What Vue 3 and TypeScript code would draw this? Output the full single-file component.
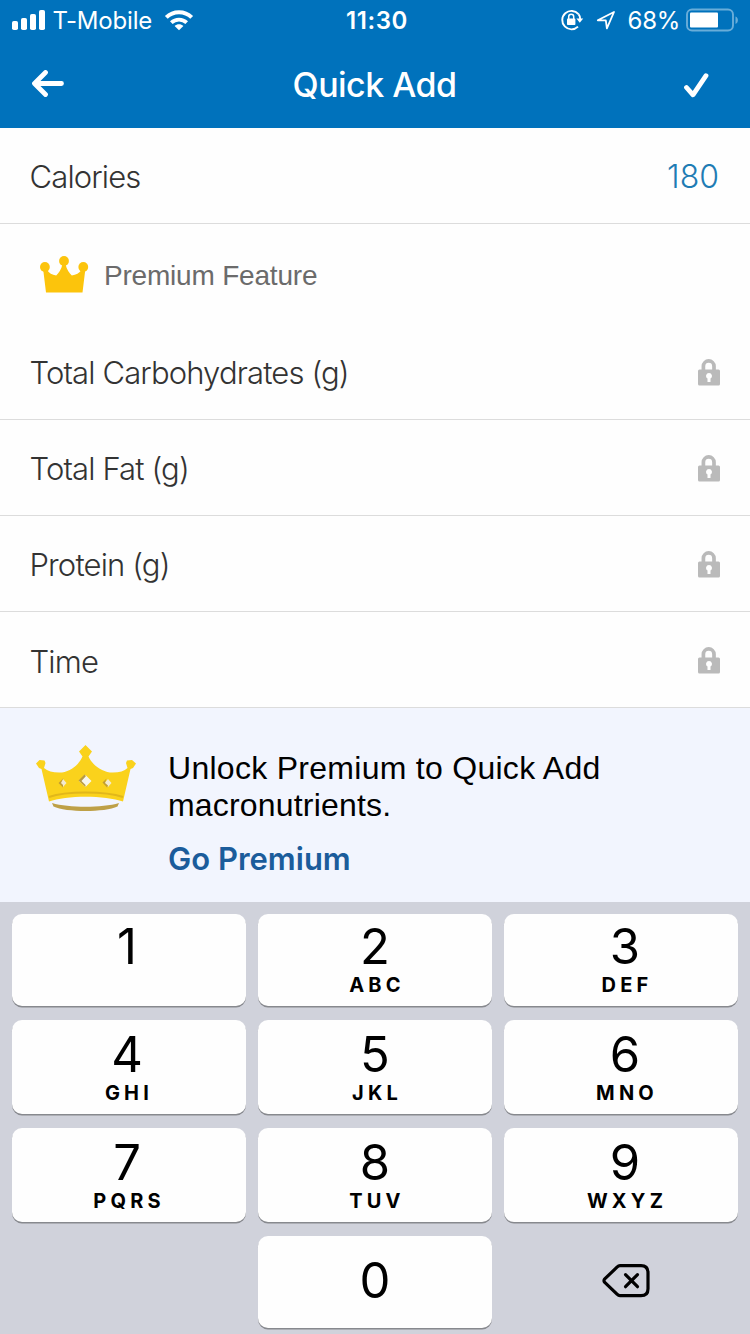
<script setup lang="ts">
interface Key {
  digit: string
  letters: string
}

const lockedFields: { label: string; cls: string }[] = [
  { label: 'Total Carbohydrates (g)', cls: 'carbs' },
  { label: 'Total Fat (g)', cls: 'fat' },
  { label: 'Protein (g)', cls: 'protein' },
  { label: 'Time', cls: 'time' },
]

const keys: Key[] = [
  { digit: '1', letters: '' },
  { digit: '2', letters: 'ABC' },
  { digit: '3', letters: 'DEF' },
  { digit: '4', letters: 'GHI' },
  { digit: '5', letters: 'JKL' },
  { digit: '6', letters: 'MNO' },
  { digit: '7', letters: 'PQRS' },
  { digit: '8', letters: 'TUV' },
  { digit: '9', letters: 'WXYZ' },
]
</script>

<template>
  <div class="screen">
    <header class="header">
      <div class="status">
        <div class="status-side">
          <svg class="signal" width="34" height="21" viewBox="0 0 34 21" fill="#fff">
            <rect x="0" y="11" width="6" height="9" rx="1.8" />
            <rect x="9" y="8" width="6" height="12" rx="1.8" />
            <rect x="18" y="4" width="6" height="16" rx="1.8" />
            <rect x="27" y="0" width="6" height="20" rx="1.8" />
          </svg>
          <span class="carrier">T-Mobile</span>
          <svg class="wifi" width="30" height="21" viewBox="0 0 30 21">
            <path d="M2.3 7.4C9.3 .4 20.7 .4 27.7 7.4" fill="none" stroke="#fff" stroke-width="4" />
            <path d="M7.3 12.6C11.6 8.5 18.4 8.5 22.7 12.6" fill="none" stroke="#fff" stroke-width="3.8" />
            <path d="M15 20.3L10.6 16C13.1 13.7 16.9 13.7 19.4 16Z" fill="#fff" />
          </svg>
        </div>
        <span class="clock">11:30</span>
        <div class="status-side right">
          <svg class="rotation" width="24" height="22" viewBox="0 0 24 22">
            <path d="M18.5 5.2A9.2 9.2 0 1 0 18 17.6" fill="none" stroke="#fff" stroke-width="1.9" />
            <path d="M18.5 5.2Q20 7 20.2 10" fill="none" stroke="#fff" stroke-width="1.9" />
            <path d="M16.4 9.4H23.2L19.8 13.8Z" fill="#fff" />
            <rect x="7" y="9.6" width="8.4" height="6.4" rx=".8" fill="#fff" />
            <path d="M8.7 10V7.8a2.5 2.5 0 0 1 5 0V10" fill="none" stroke="#fff" stroke-width="1.5" />
          </svg>
          <svg class="location" width="20" height="20" viewBox="0 0 20 20">
            <path d="M1.8 10.3L18 2L10.9 18.3L9.8 10.3Z" fill="none" stroke="#fff" stroke-width="1.8" stroke-linejoin="round" />
          </svg>
          <span class="percent">68%</span>
          <svg class="battery" width="54" height="24" viewBox="0 0 54 24">
            <rect x="1" y="1.5" width="46" height="21" rx="5" fill="none" stroke="#69add9" stroke-width="1.9" />
            <rect x="4" y="4.5" width="28" height="15" rx="1" fill="#fff" />
            <path d="M49.5 8.5v7.4c3.2-1.2 3.2-6.2 0-7.4Z" fill="#69add9" />
          </svg>
        </div>
      </div>
      <div class="nav">
        <svg width="34" height="28" viewBox="0 0 34 28" fill="none" stroke="#fff" stroke-width="4.8" stroke-linecap="round" stroke-linejoin="round">
          <path d="M14.5 2.5L3.5 13.5L14.5 24.5M4 13.5H30.5" />
        </svg>
        <h1 class="title">Quick Add</h1>
        <svg width="34" height="28" viewBox="0 0 34 28" fill="none" stroke="#fff" stroke-width="4.8" stroke-linecap="round" stroke-linejoin="round">
          <path d="M8.5 17.5L15 24.800L28 5.700" />
        </svg>
      </div>
    </header>

    <main>
      <div class="row calories">
        <span class="label">Calories</span>
        <span class="value">180</span>
      </div>

      <div class="premium">
        <svg width="50" height="38" viewBox="0 0 50 38" fill="#fcc40c">
          <circle cx="4.9" cy="11" r="4.9" />
          <circle cx="24" cy="5" r="4.9" />
          <circle cx="43.3" cy="11" r="4.9" />
          <path d="M3 12L7 14C9 17 12 19 16.2 19.5C18.500 17 21.5 13.5 22.5 8H25.5C26.500 13.5 29.5 17 31.8 19.5C36 19 39.5 17 41.500 14L45.500 12L42.500 36.500H6Z" />
        </svg>
        <span class="premium-text">Premium Feature</span>
      </div>

      <div v-for="field in lockedFields" :key="field.label" class="row" :class="field.cls">
        <span class="label">{{ field.label }}</span>
        <svg class="lock" width="24" height="28" viewBox="0 0 24 28">
          <path d="M6.4 13V7.2a5.3 5.3 0 0 1 10.6 0V13" fill="none" stroke="#bababa" stroke-width="3.7" />
          <rect x="1" y="10.5" width="22" height="16" rx="1.5" fill="#bababa" />
          <path d="M12 14a3 3 0 0 1 1.5 5.6V23h-3V19.6A3 3 0 0 1 12 14Z" fill="#fff" />
        </svg>
      </div>

      <section class="promo">
        <svg class="crown" width="102" height="70" viewBox="0 0 102 70">
          <path d="M50.5 0L57 6.5L53.5 11.5C57 19 65 26 75 27.500C83 28 89 26.500 92.5 23L91 18L92 15.500L97 15L101 18.5L98 23L95.500 24L88 56.500C70 50 31 50 14 56.500L6.500 24L4 23L1 18.500L4.5 15L9.500 15.500L10.5 18L9 23C13 26.500 19 28 27 27.500C37 26 44 19 47.5 11.5L44 6.5Z" fill="#fad21c" />
          <path d="M14 52C31 46 70 46 88 52" fill="none" stroke="#e1b71a" stroke-width="2" />
          <path d="M17 58C34 63 67 63 84 58L82.5 61.500C70 67.500 31 67.500 18.5 61.500Z" fill="#bea047" />
          <path d="M50.5 30L56.5 36L50.5 42L44 36Z" fill="#f7f6ee" />
          <path d="M49.5 29.5L43.5 35.5L50.5 42V40L46.5 36L51 31Z" fill="#b89a42" />
          <path d="M28 34L31.500 38L28 42L25 38Z" fill="#f3ead0" />
          <path d="M28.500 33L23.500 38L28 42.5V40L26 38Z" fill="#c19e33" />
          <path d="M73 34L76.5 38L73 42L69.500 38Z" fill="#f3ead0" />
          <path d="M71.5 33.5L67.5 37.500L72 42.5L73 40.5L70 38Z" fill="#c19e33" />
        </svg>
        <div class="promo-copy">
          <p class="promo-text">
            <span class="line-one">Unlock Premium to Quick Add</span><br />
            <span class="line-two">macronutrients.</span>
          </p>
          <a class="promo-link">Go Premium</a>
        </div>
      </section>
    </main>

    <div class="keyboard">
      <button v-for="key in keys" :key="key.digit" class="key" type="button">
        <span class="digit">{{ key.digit }}</span>
        <span class="letters">{{ key.letters }}</span>
      </button>
      <span></span>
      <button class="key zero" type="button"><span class="digit">0</span></button>
      <button class="delete" type="button" aria-label="Delete">
        <svg width="48" height="36" viewBox="0 0 48 36" fill="none" stroke="#000" stroke-width="3.2" stroke-linecap="round" stroke-linejoin="round">
          <path d="M18 1.7H39Q46 1.7 46 8.7V24.7Q46 31.7 39 31.7H18Q16.5 31.7 15 30.2L2.5 18.2Q1.5 16.7 2.5 15.2L15 3.2Q16.5 1.7 18 1.7Z" />
          <path d="M24.500 10.700L36.500 22.700M36.500 10.700L24.500 22.700" transform="translate(-1 0)" />
        </svg>
      </button>
    </div>
  </div>
</template>

<style>
body {
  margin: 0;
}
</style>

<style scoped>
.screen {
  width: 750px;
  height: 1334px;
  overflow: hidden;
  background: #fefefe;
  font-family: Inter, "Liberation Sans", sans-serif;
}
.header {
  height: 128px;
  background: #0072bc;
  color: #fff;
}
.status {
  display: grid;
  grid-template-columns: 1fr auto 1fr;
  align-items: center;
  height: 40px;
  padding: 0 10px 0 12px;
  box-sizing: border-box;
}
.status-side {
  display: flex;
  align-items: center;
}
.status-side.right {
  justify-content: flex-end;
}
.carrier {
  margin-left: 6.5px;
  font-size: 24px;
  letter-spacing: -0.2px;
}
.wifi {
  margin-left: 11.5px;
}
.clock {
  padding-left: 2px;
  font-size: 24px;
  font-weight: 600;
  letter-spacing: 0.6px;
}
.location {
  margin-left: 12px;
}
.percent {
  margin-left: 12px;
  font-size: 24px;
  letter-spacing: -0.3px;
}
.battery {
  margin-left: 6px;
}
.nav {
  display: flex;
  align-items: center;
  justify-content: space-between;
  height: 88px;
  padding: 0 38px 0 31px;
}
.title {
  margin: 0;
  padding-left: 6px;
  font-size: 34px;
  font-weight: 500;
  letter-spacing: -0.55px;
}
.row {
  display: flex;
  align-items: center;
  justify-content: space-between;
  height: 96px;
  padding: 2px 29px 0 29.5px;
  box-sizing: border-box;
  border-bottom: 1px solid #dcdcdc;
}
.row.calories {
  padding-right: 31px;
}
.label {
  color: #333;
  font-size: 31px;
  font-weight: 300;
  letter-spacing: -0.86px;
}
.time .label {
  padding-top: 2px;
}
.value {
  color: #1f7cb4;
  font-size: 32px;
  font-weight: 300;
}
.premium {
  display: flex;
  align-items: center;
  height: 100px;
  padding: 1px 0 0 40px;
  box-sizing: border-box;
}
.premium-text {
  margin: 3px 0 0 14px;
  color: #6b6b6b;
  font-family: "Liberation Sans", sans-serif;
  font-size: 28px;
  letter-spacing: -0.2px;
}
.promo {
  display: flex;
  height: 194px;
  padding: 37px 0 0 35px;
  box-sizing: border-box;
  background: #f2f5fe;
}
.promo-copy {
  margin: 5px 0 0 31px;
}
.promo-text {
  margin: 0;
  font-family: "Liberation Sans", sans-serif;
  font-size: 32px;
  line-height: 37px;
}
.line-one {
  letter-spacing: 0.28px;
}
.line-two {
  letter-spacing: 0.18px;
}
.promo-link {
  display: block;
  margin-top: 16px;
  color: #1b5c9b;
  font-size: 31px;
  font-weight: 600;
  line-height: 38px;
}
.keyboard {
  display: grid;
  grid-template-columns: repeat(3, 234px);
  grid-template-rows: 92px 94px 94px 92px;
  gap: 14px 12px;
  height: 432px;
  padding: 12px 12px 0;
  box-sizing: border-box;
  background: #d0d2db;
}
.key {
  display: flex;
  flex-direction: column;
  align-items: center;
  padding: 6px 0 0;
  border: 0;
  border-radius: 10px;
  background: #fefefe;
  box-shadow: 0 1.5px 0 #87898e;
  color: #000;
  font-family: inherit;
}
.key:nth-child(-n + 3) {
  padding-top: 4px;
}
.key:nth-child(3n + 1) {
  padding-right: 4px;
}
.key:nth-child(3n) {
  padding-left: 8px;
}
.digit {
  font-size: 49px;
  line-height: 57px;
}
.letters {
  padding-left: 4px;
  font-size: 20px;
  font-weight: 700;
  letter-spacing: 4.2px;
  line-height: 20px;
}
.key.zero {
  padding-top: 16px;
}
.delete {
  display: flex;
  align-items: center;
  justify-content: center;
  padding: 0 0 0 9px;
  border: 0;
  background: transparent;
}
</style>
